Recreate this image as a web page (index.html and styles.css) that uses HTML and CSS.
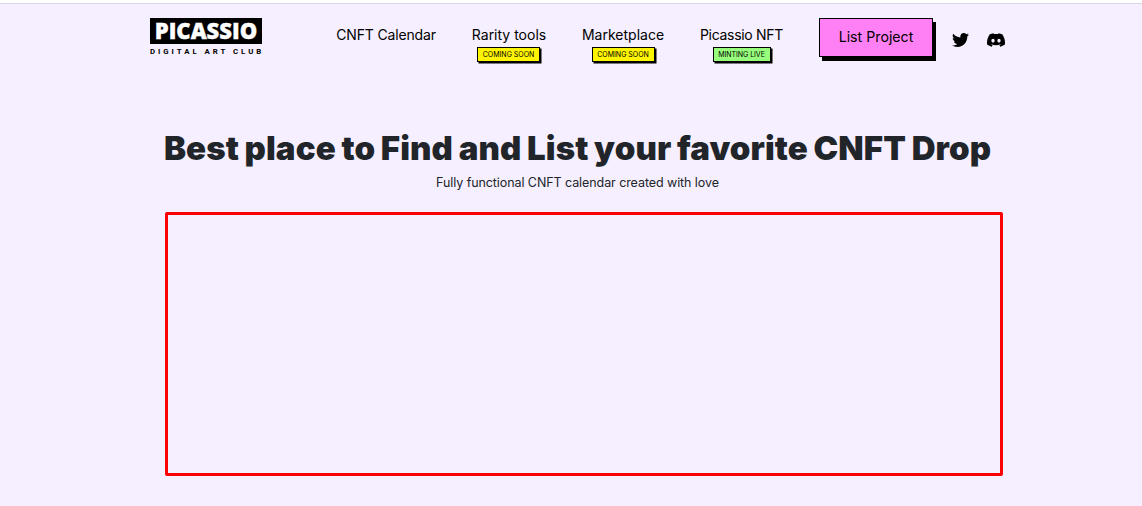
FILE: index.html
```html
<!DOCTYPE html>
<html lang="en">
<head>
<meta charset="utf-8">
<title>Picassio</title>
<link rel="stylesheet" href="styles.css">
</head>
<body>
<header class="header">
  <a class="logo"><span class="logo-name">PICASSIO</span><span class="logo-tag">DIGITAL ART CLUB</span></a>
  <nav class="nav">
    <a class="nav-item calendar"><span class="label">CNFT Calendar</span></a>
    <a class="nav-item rarity"><span class="label">Rarity tools</span><span class="badge">COMING SOON</span></a>
    <a class="nav-item market"><span class="label">Marketplace</span><span class="badge">COMING SOON</span></a>
    <a class="nav-item nft"><span class="label">Picassio NFT</span><span class="badge live">MINTING LIVE</span></a>
  </nav>
  <a class="list-button">List Project</a>
  <div class="social">
    <svg class="twitter" viewBox="0 0 512 512"><path d="M459.37 151.716c.325 4.548.325 9.097.325 13.645 0 138.72-105.583 298.558-298.558 298.558-59.452 0-114.68-17.219-161.137-47.106 8.447.974 16.568 1.299 25.34 1.299 49.055 0 94.213-16.568 130.274-44.832-46.132-.975-84.792-31.188-98.112-72.772 6.498.974 12.995 1.624 19.818 1.624 9.421 0 18.843-1.3 27.614-3.573-48.081-9.747-84.143-51.98-84.143-102.985v-1.299c13.969 7.797 30.214 12.67 47.431 13.319-28.264-18.843-46.781-51.005-46.781-87.391 0-19.492 5.197-37.36 14.294-52.954 51.655 63.675 129.3 105.258 216.365 109.807-1.624-7.797-2.599-15.918-2.599-24.04 0-57.828 46.782-104.934 104.934-104.934 30.213 0 57.502 12.67 76.67 33.137 23.715-4.548 46.456-13.32 66.599-25.34-7.798 24.366-24.366 44.833-46.132 57.827 21.117-2.273 41.584-8.122 60.426-16.243-14.292 20.791-32.161 39.308-52.628 54.253z"/></svg>
    <svg class="discord" viewBox="0 0 16 16"><path d="M13.545 2.907a13.2 13.2 0 0 0-3.257-1.011.05.05 0 0 0-.052.025c-.141.25-.297.577-.406.833a12.2 12.2 0 0 0-3.658 0 8 8 0 0 0-.412-.833.05.05 0 0 0-.052-.025c-1.125.194-2.22.534-3.257 1.011a.04.04 0 0 0-.021.018C.356 6.024-.213 9.047.066 12.032q.003.022.021.037a13.3 13.3 0 0 0 3.995 2.02.05.05 0 0 0 .056-.019q.463-.63.818-1.329a.05.05 0 0 0-.01-.059l-.018-.011a9 9 0 0 1-1.248-.595.05.05 0 0 1-.02-.066l.015-.019q.127-.095.248-.195a.05.05 0 0 1 .051-.007c2.619 1.196 5.454 1.196 8.041 0a.05.05 0 0 1 .053.007q.121.1.248.195a.05.05 0 0 1-.004.085 8 8 0 0 1-1.249.594.05.05 0 0 0-.03.03.05.05 0 0 0 .003.041c.24.465.515.909.817 1.329a.05.05 0 0 0 .056.019 13.2 13.2 0 0 0 4.001-2.02.05.05 0 0 0 .021-.037c.334-3.451-.559-6.449-2.366-9.106a.03.03 0 0 0-.02-.019m-8.198 7.307c-.789 0-1.438-.724-1.438-1.612s.637-1.613 1.438-1.613c.807 0 1.45.73 1.438 1.613 0 .888-.637 1.612-1.438 1.612m5.316 0c-.788 0-1.438-.724-1.438-1.612s.637-1.613 1.438-1.613c.807 0 1.451.73 1.438 1.613 0 .888-.631 1.612-1.438 1.612"/></svg>
  </div>
</header>
<main class="hero">
  <h1 class="title">Best place to Find and List your favorite CNFT Drop</h1>
  <p class="subtitle">Fully functional CNFT calendar created with love</p>
  <div class="frame"></div>
</main>
</body>
</html>
```
FILE: styles.css
```css
* { box-sizing: border-box; }
body { margin: 0; height: 506px; overflow: hidden; background: #f5efff; border-top: 3px solid #fff; font-family: Inter, sans-serif; color: #212529; }
.header { display: flex; align-items: flex-start; height: 105px; border-top: 1px solid #d9d5e0; padding: 14px 0 0 150px; color: #000; }
.logo { display: flex; flex-direction: column; width: 112px; }
.logo-name { height: 26px; background: #000; color: #fff; font: 800 22px/25px "Open Sans", sans-serif; text-align: center; white-space: nowrap; -webkit-text-stroke: 0.4px #fff; }
.logo-tag { margin-top: 3px; font: 700 7.8px/9px Roboto, sans-serif; letter-spacing: 2.98px; white-space: nowrap; }
.nav { display: flex; gap: 36px; margin-left: 74px; padding-top: 8px; }
.nav-item { display: flex; flex-direction: column; align-items: center; }
.label { font-size: 14px; line-height: 18px; white-space: nowrap; }
.calendar { width: 100px; letter-spacing: -0.15px; }
.rarity { width: 74px; }
.market { width: 82px; }
.nft { width: 83px; }
.nft .label { letter-spacing: -0.3px; }
.badge { margin-top: 3px; width: 63px; height: 15px; border: 1px solid #000; background: #fff500; box-shadow: 1.5px 1.5px 0 #000; font-size: 7px; line-height: 14px; text-align: center; white-space: nowrap; }
.rarity .badge { margin-right: 1px; }
.live { width: 58px; background: #97ff7c; letter-spacing: -0.05px; }
.list-button { margin-left: 36px; width: 114px; height: 39px; border: 1px solid #000; background: #ff80f4; box-shadow: 3px 4px 0 #000; font-size: 14.2px; line-height: 35px; text-align: center; white-space: nowrap; }
.social { display: flex; align-items: center; gap: 18px; margin: 13px 0 0 19px; }
.twitter { width: 17px; height: 18px; }
.discord { width: 18px; height: 18px; }
.hero { display: flex; flex-direction: column; align-items: center; padding-left: 13px; }
.title { margin: 20px 0 0; font-size: 33px; line-height: 40px; font-weight: 900; letter-spacing: 0.1px; word-spacing: -1px; white-space: nowrap; }
.subtitle { margin: 7px 0 0; font-size: 12.5px; line-height: 16px; letter-spacing: -0.08px; white-space: nowrap; }
.frame { margin: 21px 0 0 13px; width: 838px; height: 264px; border: 3px solid #f00; border-radius: 2px; }
```
